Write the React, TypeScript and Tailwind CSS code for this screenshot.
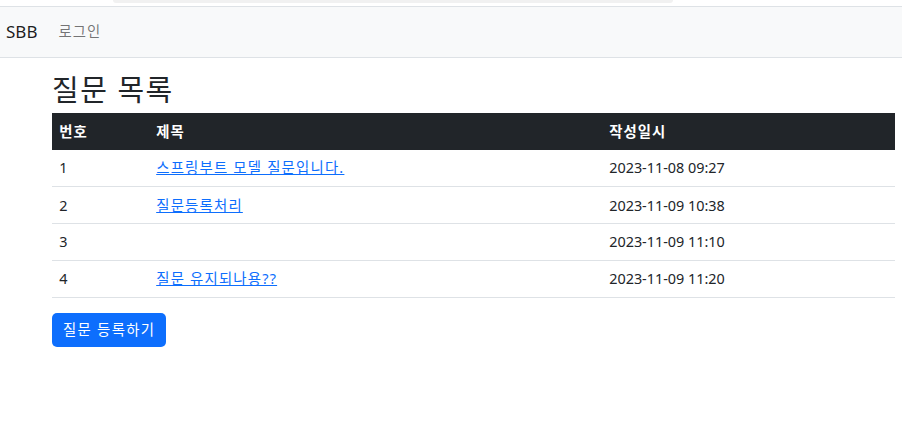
const rows = [
  { id: 1, subject: "스프링부트 모델 질문입니다.", date: "2023-11-08 09:27" },
  { id: 2, subject: "질문등록처리", date: "2023-11-09 10:38" },
  { id: 3, subject: "", date: "2023-11-09 11:10" },
  { id: 4, subject: "질문 유지되나용??", date: "2023-11-09 11:20" },
];

export default function App() {
  return (
    <div
      className="min-h-[423px] bg-white text-[14.4px] leading-[21.6px] text-[#212529]"
      style={{ fontFamily: '"Noto Sans", "Noto Sans CJK KR", sans-serif' }}
    >
      {/* browser chrome remnant */}
      <div className="h-[6px] bg-white">
        <div className="ml-[113px] h-[3px] w-[560px] rounded-b-md bg-[#f1f1f1]" />
      </div>

      <nav className="flex h-[52px] items-center border-y border-[#dee2e6] bg-[#f8f9fa] pl-[6px]">
        <a className="mr-[21px] text-[17px] text-black/90">SBB</a>
        <a className="text-[14.4px] tracking-[1px] text-black/[0.55]">로그인</a>
      </nav>

      <div className="ml-[52px] w-[843px] pt-[15px]">
        <h2 className="mb-[7px] text-[29px] leading-[33px] font-normal tracking-[1.5px]">질문 목록</h2>
        <table className="w-full border-collapse">
          <thead>
            <tr className="bg-[#212529] text-left text-white">
              <th className="h-[37px] w-[97px] px-[7.2px] font-bold tracking-[1px]">번호</th>
              <th className="w-[453px] px-[7.2px] font-bold tracking-[1px]">제목</th>
              <th className="px-[7.2px] font-bold tracking-[1px]">작성일시</th>
            </tr>
          </thead>
          <tbody>
            {rows.map((r) => (
              <tr key={r.id} className="border-b border-[#dee2e6]">
                <td className="h-[36.9px] px-[7.2px]">{r.id}</td>
                <td className="px-[7.2px]">
                  <a className="tracking-[1.2px] text-[#0d6efd] underline">{r.subject}</a>
                </td>
                <td className="px-[7.2px]">{r.date}</td>
              </tr>
            ))}
          </tbody>
        </table>
        <button
          type="button"
          className="mt-[15px] h-[34px] rounded-[5px] bg-[#0d6efd] px-[11px] tracking-[1.3px] text-white"
        >
          질문 등록하기
        </button>
      </div>
    </div>
  );
}
